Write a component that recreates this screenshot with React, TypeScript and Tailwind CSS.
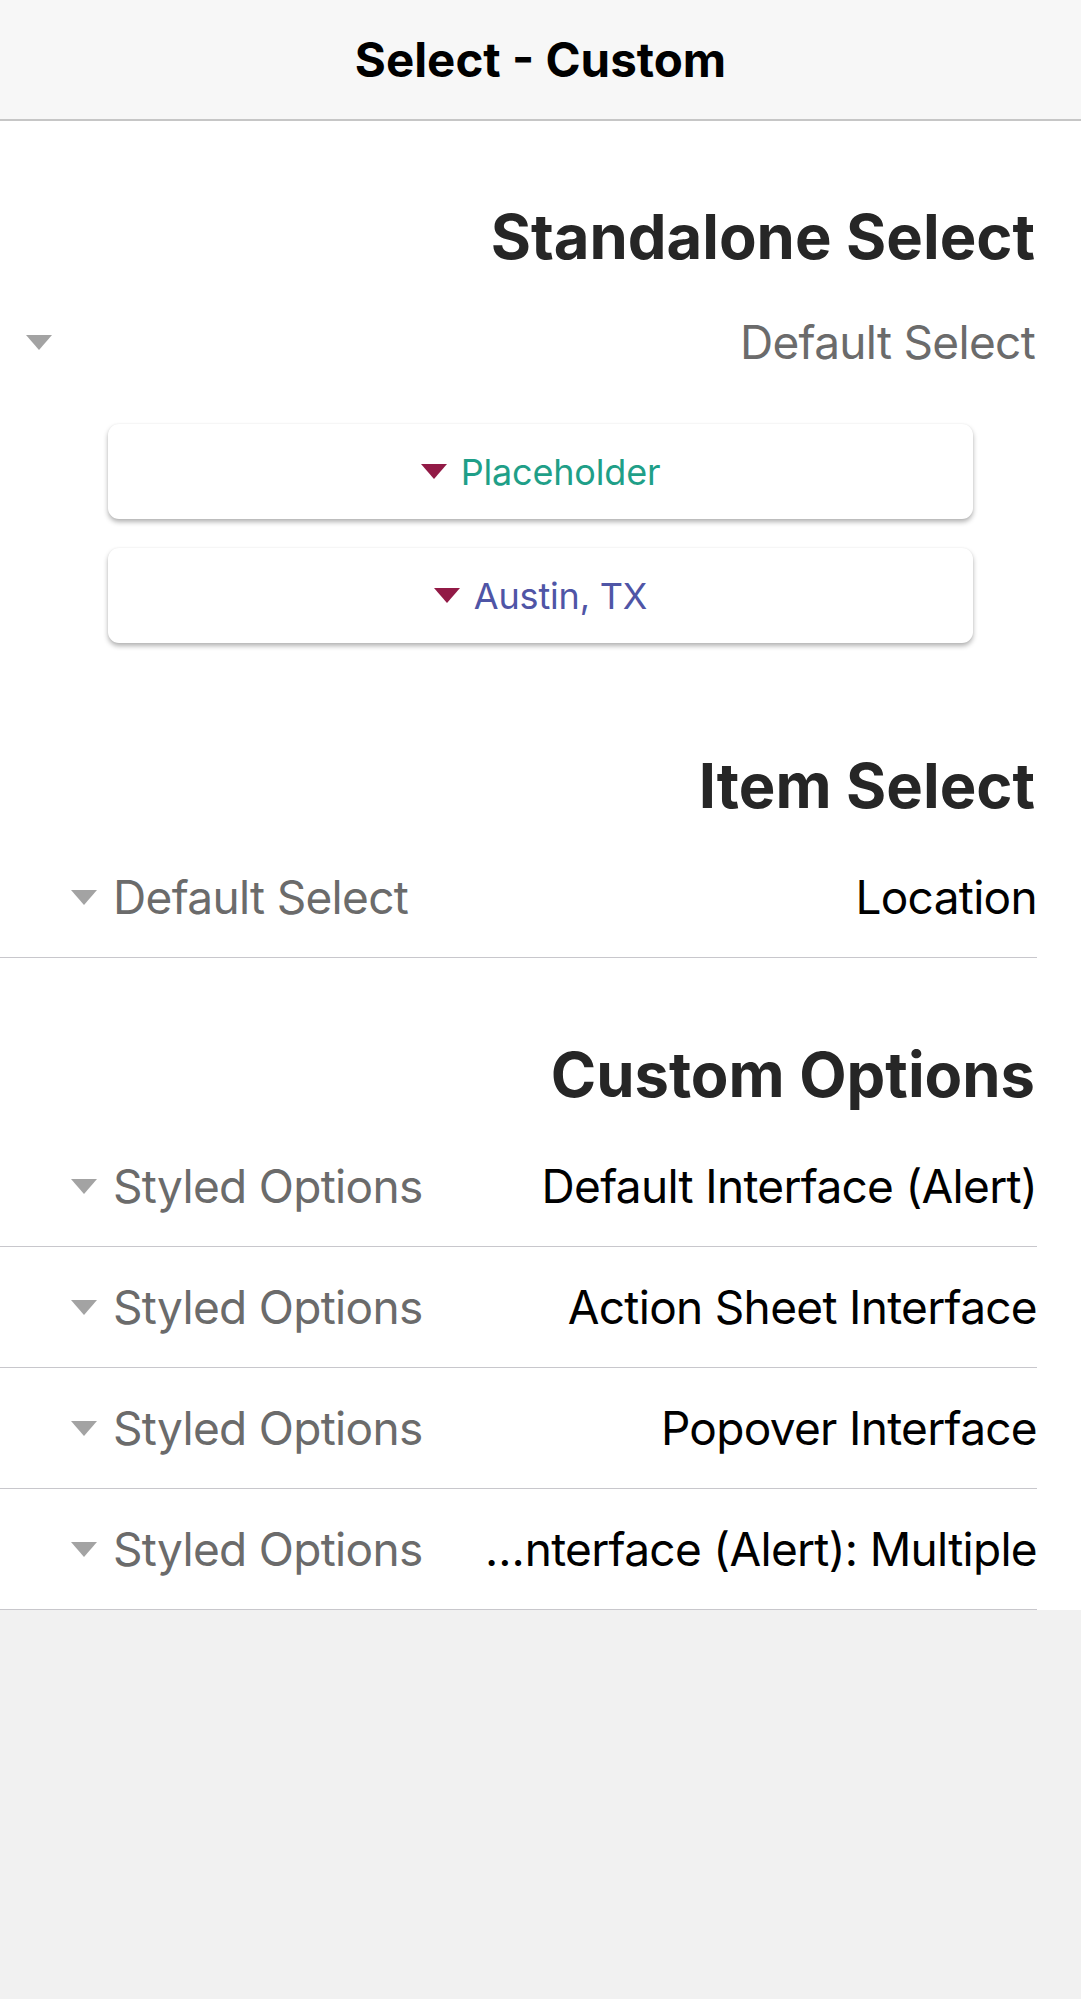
import React from 'react';

// small down-pointing caret used by every select
function Caret({ color }: { color: string }) {
  return (
    <svg width="26" height="15" viewBox="0 0 26 15" className="shrink-0">
      <polygon points="0,0 26,0 13,15" fill={color} />
    </svg>
  );
}

function Heading({ children, className }: { children: React.ReactNode; className: string }) {
  return (
    <h2 className={`h-[72px] leading-[72px] pr-[46px] text-[61.5px] font-bold text-[#262626] ${className}`}>
      {children}
    </h2>
  );
}

// --- Card style select (the two shadowed ones) ---
function CardSelect({ text, textClass, className }: { text: string; textClass: string; className: string }) {
  return (
    <div
      className={`mx-[108px] h-[95px] rounded-[11px] bg-white shadow-[0_3px_5px_rgba(0,0,0,0.3),0_0_2px_rgba(0,0,0,0.06)] flex items-center justify-center gap-[14px] ${className}`}
    >
      <span className={`text-[36px] tracking-[-0.005em] ${textClass}`}>{text}</span>
      <Caret color="#921a46" />
    </div>
  );
}

// --- Item row: label on the right, select on the left (rtl) ---
function ItemRow({ label, value, truncate }: { label: string; value: string; truncate?: boolean }) {
  return (
    <div className="pr-[44px]">
      <div className="h-[121px] flex items-center border-b-[1.5px] border-[#c8c7cc]">
        <div
          className={`flex-1 min-w-0 ml-[16px] text-[46px] tracking-[-0.015em] text-black ${truncate ? 'truncate' : ''}`}
        >
          {label}
        </div>
        <div className="flex items-center gap-[16px] pl-[71px] pr-[44px] shrink-0">
          <span className="text-[46px] tracking-[-0.015em] text-[#6b6b6b] whitespace-nowrap">{value}</span>
          <Caret color="#a3a3a3" />
        </div>
      </div>
    </div>
  );
}

export default function App() {
  return (
    <div dir="rtl" className="min-h-[1999px] bg-[#f1f1f1] font-['Inter','Noto_Sans',sans-serif]">
      <header className="h-[121px] bg-[#f7f7f7] border-b-2 border-[#c6c6c6] flex items-center justify-center">
        <h1 className="text-[47.5px] font-bold text-black">Select - Custom</h1>
      </header>

      <main className="bg-white flex flex-col">
        <Heading className="mt-[80px]">Standalone Select</Heading>

        <div className="mt-[21px] h-[96px] flex items-center justify-between pl-[26px] pr-[46px]">
          <span className="text-[46px] tracking-[-0.015em] text-[#6b6b6b]">Default Select</span>
          <Caret color="#a3a3a3" />
        </div>

        <CardSelect className="mt-[34px]" text="Placeholder" textClass="text-[#1f9f88]" />
        <CardSelect className="mt-[29px]" text="Austin, TX" textClass="text-[#4f55a6]" />

        <Heading className="mt-[107px]">Item Select</Heading>
        <div className="mt-[15px]">
          <ItemRow label="Location" value="Default Select" />
        </div>

        <Heading className="mt-[81px]">Custom Options</Heading>
        <div className="mt-[15px]">
          <ItemRow label="Default Interface (Alert)" value="Styled Options" truncate />
          <ItemRow label="Action Sheet Interface" value="Styled Options" truncate />
          <ItemRow label="Popover Interface" value="Styled Options" truncate />
          <ItemRow label="Default Interface (Alert): Multiple" value="Styled Options" truncate />
        </div>
      </main>
    </div>
  );
}
